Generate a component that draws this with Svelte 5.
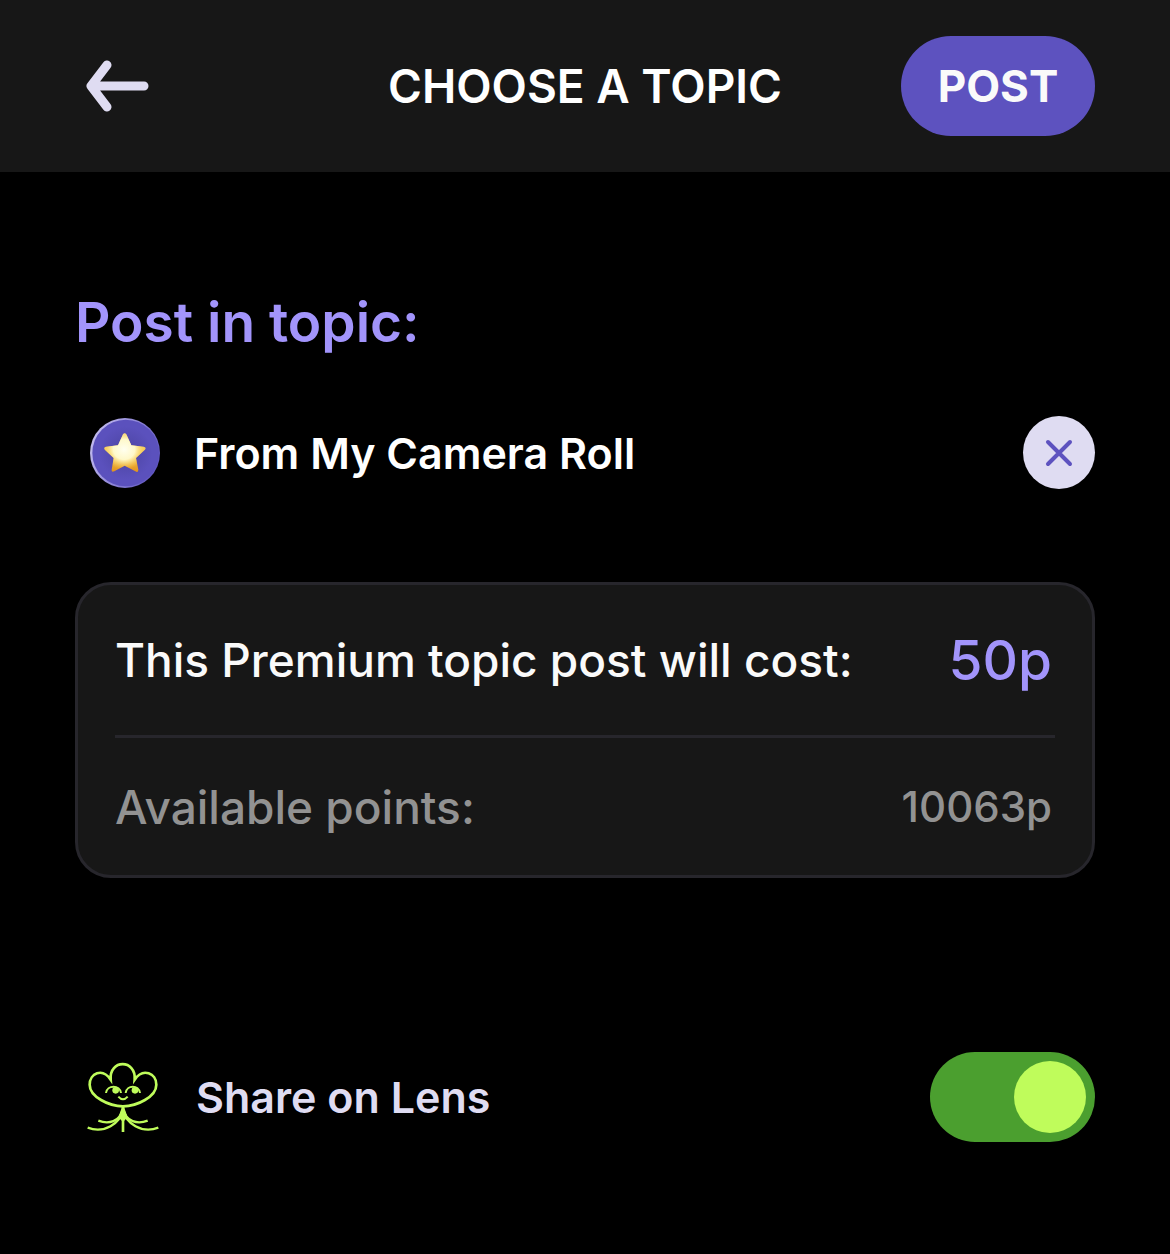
<script>
  let topic = $state('From My Camera Roll');
  let shareOnLens = $state(true);
  const cost = 50;
  const available = 10063;
</script>

<header class="bar">
  <button class="back" type="button" aria-label="Back">
    <svg viewBox="0 0 64 54" width="64" height="54" aria-hidden="true">
      <path d="M22 6 L6 27 L22 48 M9 27 H59" />
    </svg>
  </button>
  <h1>CHOOSE A TOPIC</h1>
  <button class="post" type="button">POST</button>
</header>

<main>
  <h2>Post in topic:</h2>

  {#if topic}
    <div class="topic">
      <svg class="badge" viewBox="0 0 210 210" width="70" height="70" aria-hidden="true">
        <defs>
          <linearGradient id="rim" x1="0" y1="0.3" x2="1" y2="0.7">
            <stop offset="0" stop-color="#c5bef0" />
            <stop offset="0.5" stop-color="#8f86d8" />
            <stop offset="1" stop-color="#5b51bd" />
          </linearGradient>
          <radialGradient id="disc">
            <stop offset="0" stop-color="#4b43a0" />
            <stop offset="0.8" stop-color="#5b51bd" />
          </radialGradient>
          <linearGradient id="gold" x1="0" y1="0" x2="0" y2="1">
            <stop offset="0" stop-color="#f3cf74" />
            <stop offset="0.55" stop-color="#f6c64c" />
            <stop offset="1" stop-color="#e0921f" />
          </linearGradient>
          <radialGradient id="shine" cx="0.48" cy="0.42" r="0.52">
            <stop offset="0" stop-color="#fffff0" />
            <stop offset="0.5" stop-color="#fffbd0" stop-opacity="0.95" />
            <stop offset="1" stop-color="#fbd75c" stop-opacity="0" />
          </radialGradient>
        </defs>
        <circle cx="105" cy="105" r="105" fill="url(#rim)" />
        <circle cx="107" cy="105" r="100" fill="url(#disc)" />
        <path
          d="M99 49 Q104 42 109 49 L124 82 L161 86 Q171 88 164 96 L138 120 L145 155 Q145 165 136 160 L104 143 L73 160 Q64 164 65 155 L71 120 L45 96 Q39 88 48 86 L84 82 Z"
          fill="url(#gold)"
        />
        <path
          d="M99 49 Q104 42 109 49 L124 82 L161 86 Q171 88 164 96 L138 120 L145 155 Q145 165 136 160 L104 143 L73 160 Q64 164 65 155 L71 120 L45 96 Q39 88 48 86 L84 82 Z"
          fill="url(#shine)"
        />
      </svg>
      <span class="name">{topic}</span>
      <button class="remove" type="button" aria-label="Remove topic" onclick={() => (topic = '')}>
        <svg viewBox="0 0 28 28" width="28" height="28" aria-hidden="true">
          <path d="M3 3 L25 25 M25 3 L3 25" />
        </svg>
      </button>
    </div>
  {/if}

  <dl class="card">
    <div class="line cost">
      <dt>This Premium topic post will cost:</dt>
      <dd>{cost}p</dd>
    </div>
    <div class="line points">
      <dt>Available points:</dt>
      <dd>{available}p</dd>
    </div>
  </dl>

  <div class="share">
    <svg class="lens" viewBox="0 0 216 222" width="72" height="74" aria-hidden="true">
      <g fill="none" stroke="#bffc5b" stroke-width="8">
        <path d="M71 59 C66 -3 148 -3 143 59 C168 22 208 40 208 74 C208 110 150 139 108 139 C66 139 8 110 8 74 C8 40 46 22 71 59 Z" />
        <path d="M57 99 C60 74 99 74 102 99" stroke-width="6" />
        <path d="M116 99 C119 74 156 74 159 99" stroke-width="6" />
        <path d="M94 110 Q108 126 122 110" stroke-width="6" />
        <path d="M108 141 V216" />
        <path d="M107 150 C98 184 66 194 34 182" stroke-width="7" />
        <path d="M109 150 C118 184 150 194 182 182" stroke-width="7" />
        <path d="M107 150 C100 190 52 222 2 203" stroke-width="7" />
        <path d="M109 150 C116 190 164 222 214 203" stroke-width="7" />
      </g>
      <path d="M105 141 H111 L122 172 L108 186 L94 172 Z" fill="#bffc5b" />
      <circle cx="86" cy="91" r="10" fill="#bffc5b" />
      <circle cx="144" cy="91" r="10" fill="#bffc5b" />
    </svg>
    <label for="lens">Share on Lens</label>
    <input id="lens" class="toggle" type="checkbox" role="switch" bind:checked={shareOnLens} />
  </div>
</main>

<style>
  :global(body) {
    margin: 0;
    background: #000;
    color: #fff;
    font-family: Gilroy, Inter, sans-serif;
  }

  h1,
  h2,
  dl,
  dd {
    margin: 0;
  }

  button {
    border: 0;
    padding: 0;
    font-family: inherit;
    cursor: pointer;
  }

  svg {
    display: block;
    flex: none;
  }

  .bar {
    display: grid;
    grid-template-columns: 1fr auto 1fr;
    align-items: center;
    padding: 36px 75px;
    background: #171717;
  }

  .back {
    justify-self: start;
    margin-left: 10px;
    background: none;
  }

  .back path {
    fill: none;
    stroke: #dfdcf2;
    stroke-width: 9;
    stroke-linecap: round;
    stroke-linejoin: round;
  }

  h1 {
    font-size: 46px;
    line-height: 60px;
    font-weight: 600;
  }

  .post {
    justify-self: end;
    width: 194px;
    height: 100px;
    border-radius: 50px;
    background: #5d52bf;
    color: #fafafa;
    font-size: 44px;
    font-weight: 700;
  }

  main {
    padding: 112px 75px;
  }

  h2 {
    color: #a294fb;
    font-size: 55px;
    line-height: 76px;
    font-weight: 600;
  }

  .topic {
    display: flex;
    align-items: center;
    gap: 34px;
    margin-top: 56px;
    padding-left: 15px;
  }

  .name,
  label {
    flex: 1;
    font-size: 43px;
    line-height: 60px;
    font-weight: 600;
  }

  .remove {
    display: grid;
    place-items: center;
    width: 72px;
    height: 73px;
    border-radius: 50%;
    background: #dfdcf2;
  }

  .remove path {
    fill: none;
    stroke: #5d52bf;
    stroke-width: 4;
    stroke-linecap: round;
  }

  .card {
    margin-top: 93px;
    padding: 0 37px;
    border: 3px solid #27262c;
    border-radius: 36px;
    background: #171717;
  }

  .line {
    display: flex;
    align-items: center;
    justify-content: space-between;
    padding-right: 3px;
    font-size: 46px;
    font-weight: 500;
  }

  .cost {
    height: 150px;
    color: #fafafa;
  }

  .cost dd {
    color: #a294fb;
    font-size: 55px;
  }

  .points {
    height: 137px;
    border-top: 3px solid #27262c;
    color: #929292;
  }

  .points dd {
    font-size: 42px;
  }

  .share {
    display: flex;
    align-items: center;
    gap: 37px;
    margin-top: 174px;
    padding-left: 12px;
  }

  label {
    color: #dfdcf2;
  }

  .toggle {
    appearance: none;
    display: flex;
    align-items: center;
    width: 165px;
    height: 90px;
    margin: 0;
    padding: 0 9px;
    border-radius: 45px;
    background: #3a3a3f;
    cursor: pointer;
  }

  .toggle::before {
    content: '';
    width: 72px;
    height: 72px;
    border-radius: 50%;
    background: #dfdcf2;
  }

  .toggle:checked {
    justify-content: flex-end;
    background: #4b9f2f;
  }

  .toggle:checked::before {
    background: #bffc5b;
  }
</style>
